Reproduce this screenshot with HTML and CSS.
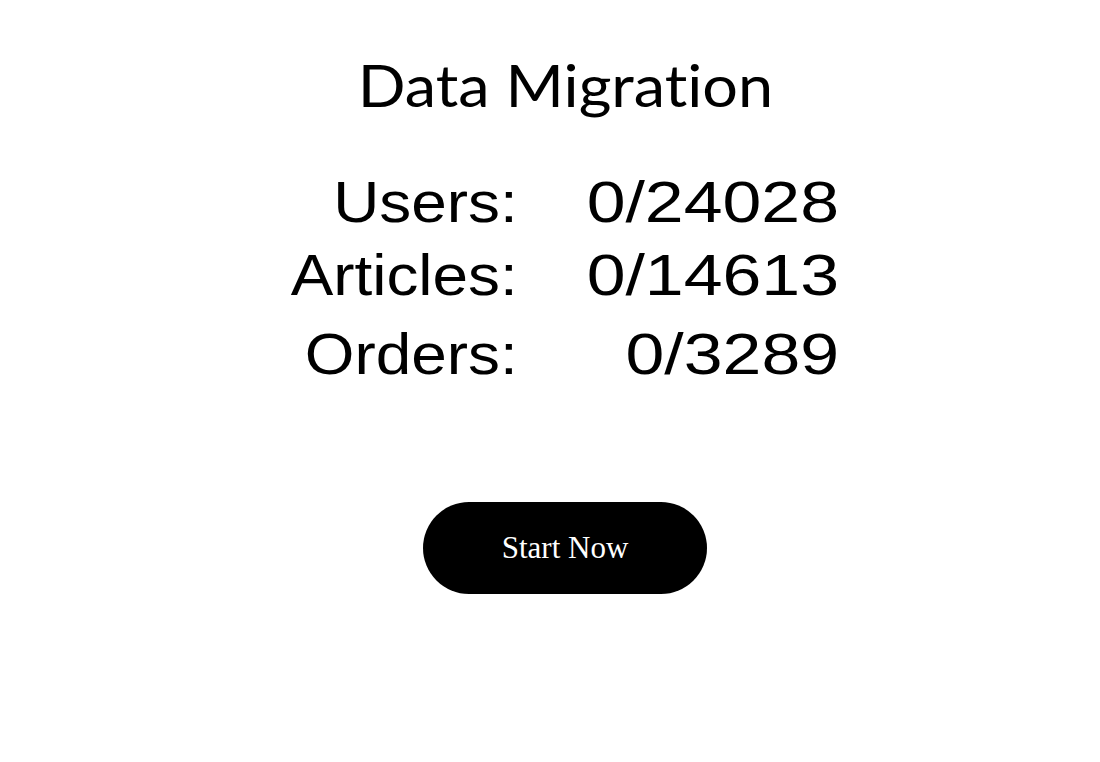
FILE: index.html
```html
<!DOCTYPE html>
<html lang="en">
<head>
<meta charset="utf-8">
<title>Data Migration</title>
<link rel="stylesheet" href="styles.css">
</head>
<body>
<main class="page">
  <h1 class="title">Data Migration</h1>
  <div class="stats">
    <div class="label">Users:</div><div class="value">0/24028</div>
    <div class="label">Articles:</div><div class="value">0/14613</div>
    <div class="label last">Orders:</div><div class="value last">0/3289</div>
  </div>
  <button class="start">Start Now</button>
</main>
</body>
</html>
```
FILE: styles.css
```css
html, body {
  margin: 0;
  padding: 0;
  background: #ffffff;
  color: #000000;
}
.page {
  box-sizing: border-box;
  width: 1100px;
  padding-left: 30px;
  display: flex;
  flex-direction: column;
  align-items: center;
}
.title {
  margin: 50px 0 0 0;
  font-family: Lato, "Liberation Sans", sans-serif;
  font-weight: 400;
  font-size: 58px;
  line-height: 1.2;
  font-variant-ligatures: none;
  transform: scaleX(1.085);
}
.stats {
  margin-top: 46px;
  margin-left: 24px;
  display: grid;
  grid-template-columns: auto auto;
  column-gap: 115px;
  font-family: "Liberation Sans", Arial, sans-serif;
  font-size: 57px;
  line-height: 73px;
}
.label, .value {
  text-align: right;
  transform-origin: right center;
}
.label {
  transform: scaleX(1.12);
}
.value {
  transform: scaleX(1.225);
}
.last {
  margin-top: 6px;
}
.start {
  margin-top: 111px;
  width: 284px;
  height: 92px;
  border: none;
  border-radius: 46px;
  background: #000000;
  color: #ffffff;
  font-family: "Liberation Serif", serif;
  font-size: 31px;
  padding: 0;
}
```
